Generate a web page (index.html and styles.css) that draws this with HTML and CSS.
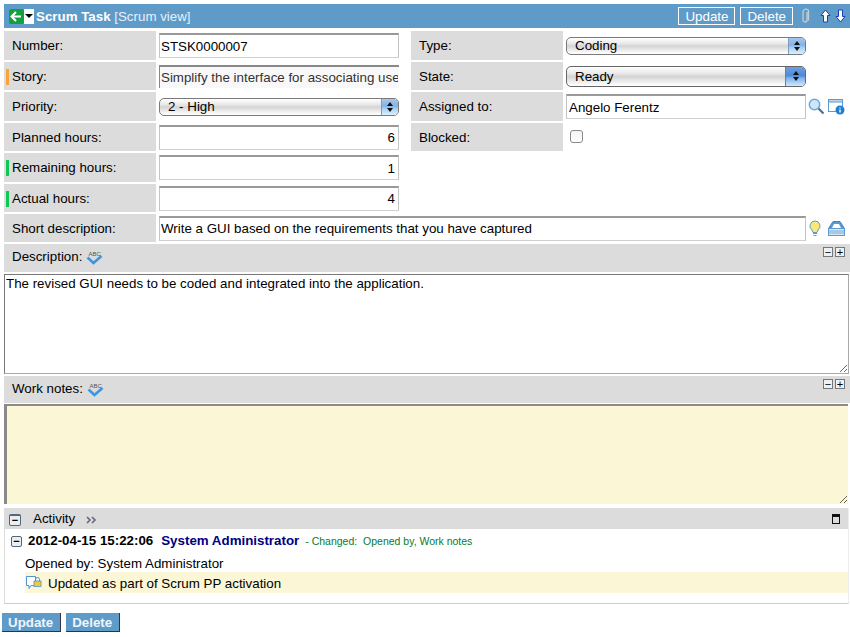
FILE: index.html
```html
<!DOCTYPE html>
<html lang="en">
<head>
  <meta charset="UTF-8" />
  <title>Scrum Task</title>
  <link rel="stylesheet" href="styles.css">
</head>
<body>

  <form class="task-form">
    <div class="header">
      <div class="nav-back">
        <svg class="back-icon" width="15" height="15" viewBox="0 0 15 15">
          <rect width="15" height="15" rx="2" fill="#10a040"/>
          <path d="M2.5 7.5h9.5M7 3L2.5 7.5 7 12" fill="none" stroke="#fff" stroke-width="2"/>
        </svg>
        <span class="back-menu"><svg width="8" height="4" viewBox="0 0 8 4"><path d="M0 0h8L4 4z" fill="#000"/></svg></span>
      </div>
      <span class="title"><b>Scrum Task</b> [Scrum view]</span>
      <div class="header-actions">
        <button type="button" class="head-btn">Update</button>
        <button type="button" class="head-btn">Delete</button>
        <svg class="clip" width="9" height="16" viewBox="0 0 9 16">
          <path d="M6.5 4v8a2 2 0 0 1-4 0V3.500a3 3 0 0 1 5.500-1V12.500" transform="translate(-.5 0)" fill="none" stroke="#c4ccd2" stroke-width="1.300"/>
        </svg>
        <svg class="arrow" width="11" height="14" viewBox="0 0 11 14"><path d="M5.500 1L10 6.500H7.500V13h-4V6.500H1z" fill="#fff" stroke="#1a3fc0"/></svg>
        <svg class="arrow" width="11" height="14" viewBox="0 0 11 14"><path d="M5.500 13L10 7.500H7.500V1h-4v6.500H1z" fill="#fff" stroke="#1a3fc0"/></svg>
      </div>
    </div>

    <div class="fields">
      <div class="label">Number:</div>
      <div class="value"><input class="text-input" type="text" value="STSK0000007"></div>
      <div class="label">Type:</div>
      <div class="value">
        <div class="select select-small"><span>Coding</span><i class="stepper"><em class="up"></em><em class="down"></em></i></div>
      </div>

      <div class="label mark-orange">Story:</div>
      <div class="value"><input class="text-input readonly" type="text" readonly value="Simplify the interface for associating users with roles"></div>
      <div class="label">State:</div>
      <div class="value">
        <div class="select select-focus"><span>Ready</span><i class="stepper"><em class="up"></em><em class="down"></em></i></div>
      </div>

      <div class="label">Priority:</div>
      <div class="value">
        <div class="select select-small"><span>2 - High</span><i class="stepper"><em class="up"></em><em class="down"></em></i></div>
      </div>
      <div class="label">Assigned to:</div>
      <div class="value with-icons">
        <input class="text-input assigned" type="text" value="Angelo Ferentz">
        <svg class="lookup" width="17" height="17" viewBox="0 0 17 17">
          <circle cx="6.500" cy="6.500" r="5.200" fill="#cfe6f8" stroke="#6fa8d8" stroke-width="1.500"/>
          <path d="M10.500 10.500L15.500 15.500" stroke="#4a6f90" stroke-width="2.200"/>
        </svg>
        <svg class="info" width="17" height="17" viewBox="0 0 17 17">
          <rect x=".5" y="1.500" width="14" height="12" fill="#fff" stroke="#5a9ad0"/>
          <rect x=".5" y="1.500" width="14" height="2.500" fill="#bcd8ef" stroke="#5a9ad0"/>
          <circle cx="12" cy="12" r="4.500" fill="#1f7fd0"/>
          <path d="M12 9.500v1M12 11.500v3" stroke="#fff" stroke-width="1.400"/>
        </svg>
      </div>

      <div class="label">Planned hours:</div>
      <div class="value"><input class="text-input number" type="text" value="6"></div>
      <div class="label">Blocked:</div>
      <div class="value"><span class="checkbox"></span></div>

      <div class="label mark-green">Remaining hours:</div>
      <div class="value"><input class="text-input number" type="text" value="1"></div>
      <div class="blank"></div>

      <div class="label mark-green">Actual hours:</div>
      <div class="value"><input class="text-input number" type="text" value="4"></div>
      <div class="blank"></div>

      <div class="label">Short description:</div>
      <div class="value wide with-icons">
        <input class="text-input" type="text" value="Write a GUI based on the requirements that you have captured">
        <svg class="bulb" width="12" height="17" viewBox="0 0 12 17">
          <path d="M6 1a5 5 0 0 0-3 9l1 2.500h4L9 10a5 5 0 0 0-3-9z" fill="#fbe875" stroke="#5a9ad0"/>
          <path d="M4 13.500h4M4.500 15.500h3" stroke="#5a9ad0" stroke-width="1.200"/>
        </svg>
        <svg class="stack" width="17" height="15" viewBox="0 0 17 15">
          <path d="M5 .5h7l4.500 7h-16z" fill="#5a9ad0" stroke="#3f83bd"/>
          <path d="M6 3h5l2 4H4z" fill="#fff"/>
          <rect x=".5" y="7.500" width="16" height="7" fill="#d6e8f6" stroke="#5a9ad0"/>
          <path d="M1 10h15M1 12h15" stroke="#5a9ad0" stroke-width=".8"/>
        </svg>
      </div>
    </div>

    <div class="section-bar bar-description">
      <span class="bar-label">Description:
        <svg class="spell" width="17" height="14" viewBox="0 0 17 14">
          <text x="2.500" y="5" class="spell-text">ABC</text>
          <path d="M1.500 6.500l6 5.500 8-7" fill="none" stroke="#3b97e3" stroke-width="2.600"/>
        </svg>
      </span>
      <span class="toggles"><i class="toggle">&minus;</i><i class="toggle">+</i></span>
    </div>
    <textarea class="big-text desc-text">The revised GUI needs to be coded and integrated into the application.</textarea>

    <div class="section-bar bar-notes">
      <span class="bar-label">Work notes:
        <svg class="spell" width="17" height="14" viewBox="0 0 17 14">
          <text x="2.500" y="5" class="spell-text">ABC</text>
          <path d="M1.500 6.500l6 5.500 8-7" fill="none" stroke="#3b97e3" stroke-width="2.600"/>
        </svg>
      </span>
      <span class="toggles"><i class="toggle">&minus;</i><i class="toggle">+</i></span>
    </div>
    <textarea class="big-text notes-text"></textarea>

    <div class="activity">
      <div class="activity-head">
        <i class="collapse">&minus;</i>
        <span class="activity-title">Activity</span>
        <svg class="more" width="12" height="8" viewBox="0 0 12 8"><path d="M1 1l3 3-3 3M6 1l3 3-3 3" fill="none" stroke="#667" stroke-width="1.600"/></svg>
        <span class="maximize"></span>
      </div>
      <div class="entry-head">
        <i class="collapse small">&minus;</i>
        <b class="entry-date">2012-04-15 15:22:06</b>
        <b class="entry-user">System Administrator</b>
        <span class="entry-changes">- Changed:&nbsp; Opened by, Work notes</span>
      </div>
      <div class="entry-line">Opened by: System Administrator</div>
      <div class="entry-note">
        <svg width="17" height="15" viewBox="0 0 17 15">
          <path d="M1.500 1.500h9v9H6l-2 3v-3H1.500z" fill="#fff" stroke="#4d94d0"/>
          <rect x="9" y="6" width="7" height="5.500" fill="#f3c93a" stroke="#4d94d0" stroke-width=".8"/>
          <path d="M10.500 6V4.500a2 2 0 0 1 4 0V6" fill="none" stroke="#4d94d0"/>
        </svg>
        <span class="note-text">Updated as part of Scrum PP activation</span>
      </div>
    </div>

    <div class="footer-buttons">
      <button type="button" class="foot-btn">Update</button>
      <button type="button" class="foot-btn">Delete</button>
    </div>
  </form>

</body>
</html>
```

FILE: styles.css
```css
* {
  box-sizing: border-box;
}

html, body {
  margin: 0;
  background: #fff;
}

body {
  font-family: 'Liberation Sans', Arial, sans-serif;
  font-size: 13.33px;
  color: #000;
  padding: 4px 0 0 2px;
  height: 637px;
  overflow: hidden;
}

.task-form {
  width: 848px;
}

/* title bar */
.header {
  display: flex;
  align-items: center;
  height: 24px;
  margin-left: 2px;
  background: #5f9bc9;
  color: #fff;
}

.nav-back {
  display: flex;
  align-items: center;
  margin-left: 5px;
}

.back-icon {
  display: block;
}

.back-menu {
  display: flex;
  align-items: center;
  justify-content: center;
  width: 10px;
  height: 15px;
  background: #fff;
}

.title {
  margin-left: 2px;
  color: #e6f0f8;
}

.title b {
  color: #fff;
}

.header-actions {
  display: flex;
  align-items: center;
  margin-left: auto;
}

.head-btn {
  height: 18px;
  margin-right: 5px;
  padding: 0 6px;
  background: transparent;
  border: 1px solid #fff;
  color: #fff;
  font: 13.33px 'Liberation Sans', Arial, sans-serif;
}

.clip {
  margin: 0 10px 0 3px;
}

.arrow {
  margin-right: 4px;
}

/* field grid */
.fields {
  display: grid;
  grid-template-columns: 152px 255px 152px 287px;
  grid-template-rows: 29px 28px 29px 28px 29px 28px 28px;
  row-gap: 2px;
  margin: 3px 0 0 2px;
}

.label {
  display: flex;
  align-items: center;
  padding-left: 8px;
  background: #dcdcdc;
  position: relative;
}

.mark-orange::before,
.mark-green::before {
  content: "";
  position: absolute;
  left: 2px;
  top: 7px;
  width: 3px;
  height: 16px;
}

.mark-orange::before {
  background: #f9a33a;
}

.mark-green::before {
  background: #0cc956;
}

.value {
  display: flex;
  align-items: center;
  padding-left: 3px;
}

.wide {
  grid-column: 2 / 5;
}

.blank {
  grid-column: 3 / 5;
}

.text-input {
  width: 240px;
  height: 25px;
  padding: 0 1px;
  border: 1px solid #d0d0d0;
  border-top: 2px solid #999;
  border-left-color: #c4c4c4;
  border-right-color: #c4c4c4;
  background: #fff;
  color: #000;
  outline: none;
  font: 13.33px 'Liberation Sans', Arial, sans-serif;
}

.assigned {
  padding-left: 2px;
}

.wide .text-input {
  width: 647px;
}

.number {
  text-align: right;
  padding-right: 3px;
}

.readonly {
  height: 23px;
  border: none;
  border-top: 2px solid #888;
  border-left: 1px solid #888;
  background: #f8f8f8;
  color: #333;
}

.lookup {
  margin-left: 2px;
}

.info {
  margin-left: 3px;
}

.bulb {
  margin-left: 3px;
}

.stack {
  margin-left: 7px;
}

/* aqua style selects */
.select {
  display: flex;
  align-items: center;
  justify-content: space-between;
  width: 240px;
  height: 18px;
  padding-left: 8px;
  border: 1px solid #7a7a7a;
  border-radius: 5px;
  background: linear-gradient(#fff 0%, #e8e8e8 35%, #d4d4d4 50%, #f4f4f4 85%, #fff 100%);
  overflow: hidden;
}

.select-focus {
  height: 21px;
  border-color: #666;
}

.stepper {
  display: flex;
  flex-direction: column;
  align-items: center;
  justify-content: center;
  gap: 2px;
  width: 17px;
  height: 100%;
  border-left: 1px solid #7d9cc4;
  background: linear-gradient(#a6c6ec 0%, #86b2e6 45%, #a8d0f2 60%, #dcf0fc 100%);
}

.select-focus .stepper {
  width: 20px;
  border-left-color: #5f7fa8;
  background: linear-gradient(#6d9fe0 0%, #4f8ad6 45%, #7fb4ee 60%, #cfeafc 100%);
}

.stepper em {
  width: 0;
  height: 0;
  border-left: 3px solid transparent;
  border-right: 3px solid transparent;
}

.stepper .up {
  border-bottom: 4px solid #111;
}

.stepper .down {
  border-top: 4px solid #111;
}

.checkbox {
  width: 13px;
  height: 13px;
  margin: 0 0 2px 4px;
  border: 1px solid #8a8a8a;
  border-radius: 3px;
  background: linear-gradient(#f4f4f4, #fff);
}

/* description and notes */
.section-bar {
  display: flex;
  justify-content: space-between;
  margin-left: 2px;
  background: #dcdcdc;
}

.bar-description {
  height: 28px;
  margin-top: 2px;
}

.bar-notes {
  height: 27px;
  margin-top: 2px;
}

.bar-label {
  display: flex;
  align-items: center;
  gap: 4px;
  height: 24px;
  padding-left: 8px;
}

.spell {
  margin-top: 3px;
}

.spell-text {
  font: 6px 'Liberation Sans', Arial, sans-serif;
  fill: #555;
}

.toggles {
  display: flex;
  gap: 2px;
  padding: 3px 5px 0 0;
}

.toggle {
  display: flex;
  align-items: center;
  justify-content: center;
  width: 10px;
  height: 10px;
  border: 1px solid #777;
  background: #f0f0f0;
  font: 11px/1 'Liberation Sans', Arial, sans-serif;
}

.big-text {
  display: block;
  width: 845px;
  margin: 2px 0 0 2px;
  padding: 1px;
  border: 1px solid #aaa;
  border-top: 1px solid #777;
  border-left: 1px solid #777;
  border-radius: 0;
  outline: none;
  resize: both;
  font: 13.33px 'Liberation Sans', Arial, sans-serif;
}

.desc-text {
  height: 100px;
}

.notes-text {
  width: 844px;
  height: 100px;
  margin-top: 1px;
  border: none;
  border-top: 2px solid #8a8a8a;
  border-left: 3px solid #8a8a8a;
  background: #fbf6d6;
}

/* activity */
.activity {
  width: 845px;
  height: 96px;
  margin: 4px 0 0 2px;
  border-left: 1px solid #ddd;
  border-bottom: 1px solid #ccc;
  border-right: 1px solid #eee;
}

.activity-head {
  display: flex;
  align-items: center;
  height: 21px;
  padding: 0 8px 0 4px;
  background: #dcdcdc;
}

.collapse {
  display: flex;
  align-items: center;
  justify-content: center;
  width: 12px;
  height: 12px;
  margin-top: 3px;
  border: 1px solid #567;
  border-top-width: 2px;
  border-radius: 2px;
  background: #e8eef2;
  font: bold 11px/1 'Liberation Sans', Arial, sans-serif;
}

.collapse.small {
  width: 11px;
  height: 11px;
  margin-top: 2px;
  border-top-width: 1px;
}

.activity-title {
  margin-left: 12px;
}

.more {
  margin: 2px 0 0 11px;
}

.maximize {
  margin-left: auto;
  width: 8px;
  height: 10px;
  border: 1px solid #111;
  border-top-width: 3px;
}

.entry-head {
  display: flex;
  align-items: center;
  height: 23px;
  padding-left: 6px;
}

.entry-date {
  margin-left: 6px;
}

.entry-user {
  margin-left: 8px;
  color: #000080;
}

.entry-changes {
  margin-left: 6px;
  font-size: 10.5px;
  color: #0a7a2a;
}

.entry-line {
  margin-top: 3px;
  padding-left: 20px;
  line-height: 17px;
}

.entry-note {
  display: flex;
  align-items: center;
  gap: 6px;
  height: 21px;
  margin-left: 20px;
  background: #fbf6d6;
}

.note-text {
  margin-top: 2px;
}

/* bottom buttons */
.footer-buttons {
  display: flex;
  gap: 5px;
  margin-top: 9px;
}

.foot-btn {
  height: 19px;
  padding: 0 7px 0 6px;
  border: none;
  border-right: 1px solid #334;
  border-bottom: 1px solid #334;
  background: #5f9bc9;
  color: #eef5fa;
  font: bold 13.33px 'Liberation Sans', Arial, sans-serif;
}
```
